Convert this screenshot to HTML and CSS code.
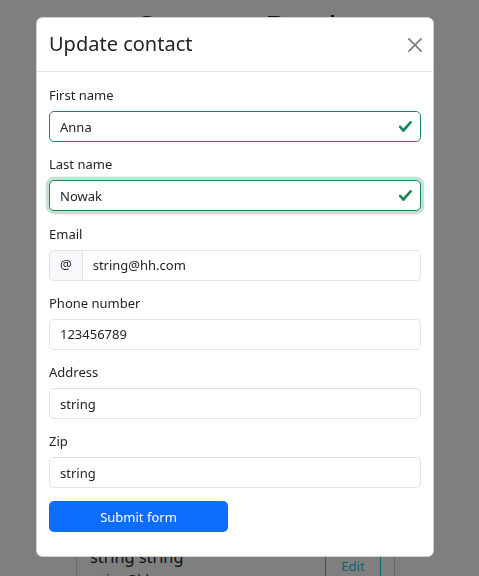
FILE: index.html
```html
<!DOCTYPE html>
<html lang="en">
<head>
<meta charset="utf-8">
<title>Contact Book</title>
<link rel="stylesheet" href="styles.css">
</head>
<body>
<main class="page">
  <h1 class="page-title">Contact Book</h1>
  <div class="contacts">
    <div class="contact-card"><div class="contact-info"><h5 class="contact-name">string string</h5><p class="contact-line">string@hh.com</p></div><button class="btn-edit" type="button">Edit</button></div>
    <div class="contact-card"><div class="contact-info"><h5 class="contact-name">string string</h5><p class="contact-line">string@hh.com</p></div><button class="btn-edit" type="button">Edit</button></div>
    <div class="contact-card"><div class="contact-info"><h5 class="contact-name">string string</h5><p class="contact-line">string@hh.com</p></div><button class="btn-edit" type="button">Edit</button></div>
    <div class="contact-card"><div class="contact-info"><h5 class="contact-name">string string</h5><p class="contact-line">string@hh.com</p></div><button class="btn-edit" type="button">Edit</button></div>
    <div class="contact-card"><div class="contact-info"><h5 class="contact-name">string string</h5><p class="contact-line">string@hh.com</p></div><button class="btn-edit" type="button">Edit</button></div>
    <div class="contact-card"><div class="contact-info"><h5 class="contact-name">string string</h5><p class="contact-line">string@hh.com</p></div><button class="btn-edit" type="button">Edit</button></div>
  </div>
</main>

<div class="backdrop"></div>

<div class="modal" role="dialog" aria-labelledby="modal-title">
  <div class="modal-content">
    <div class="modal-header">
      <h5 class="modal-title" id="modal-title">Update contact</h5>
      <button class="btn-close" type="button" aria-label="Close">
        <svg viewBox="0 0 16 16" width="14" height="14" aria-hidden="true"><path d="M.293.293a1 1 0 0 1 1.414 0L8 6.586 14.293.293a1 1 0 1 1 1.414 1.414L9.414 8l6.293 6.293a1 1 0 0 1-1.414 1.414L8 9.414l-6.293 6.293a1 1 0 0 1-1.414-1.414L6.586 8 .293 1.707a1 1 0 0 1 0-1.414"/></svg>
      </button>
    </div>
    <div class="modal-body">
      <form class="form">
        <div class="field">
          <label class="form-label" for="first-name">First name</label>
          <div class="valid-wrap">
            <input class="form-control is-valid" id="first-name" type="text" value="Anna">
            <svg class="valid-icon" viewBox="0 0 8 8" aria-hidden="true"><path d="M2.3 6.73.6 4.53c-.4-1.04.46-1.4 1.1-.8l1.1 1.4 3.4-3.8c.6-.63 1.6-.27 1.2.7l-4 4.6c-.43.5-.8.4-1.1.1z"/></svg>
          </div>
        </div>
        <div class="field">
          <label class="form-label" for="last-name">Last name</label>
          <div class="valid-wrap">
            <input class="form-control is-valid is-focused" id="last-name" type="text" value="Nowak">
            <svg class="valid-icon" viewBox="0 0 8 8" aria-hidden="true"><path d="M2.3 6.73.6 4.53c-.4-1.04.46-1.4 1.1-.8l1.1 1.4 3.4-3.8c.6-.63 1.6-.27 1.2.7l-4 4.6c-.43.5-.8.4-1.1.1z"/></svg>
          </div>
        </div>
        <div class="field">
          <label class="form-label" for="email">Email</label>
          <div class="input-group">
            <span class="input-group-text">@</span>
            <input class="form-control group-control" id="email" type="text" value="string@hh.com">
          </div>
        </div>
        <div class="field">
          <label class="form-label" for="phone">Phone number</label>
          <input class="form-control" id="phone" type="text" value="123456789">
        </div>
        <div class="field">
          <label class="form-label" for="address">Address</label>
          <input class="form-control" id="address" type="text" value="string">
        </div>
        <div class="field">
          <label class="form-label" for="zip">Zip</label>
          <input class="form-control" id="zip" type="text" value="string">
        </div>
        <button class="btn-submit" type="submit">Submit form</button>
      </form>
    </div>
  </div>
</div>
</body>
</html>
```

FILE: styles.css
```css
* {
  box-sizing: border-box;
}

body {
  margin: 0;
  background: #fff;
  color: #212529;
  font-family: "Noto Sans", sans-serif;
  font-size: 13px;
  line-height: 19.5px;
}

/* ---------- page behind the dialog ---------- */
.page-title {
  margin: 7px 0 44px;
  font-size: 34px;
  line-height: 43px;
  font-weight: 400;
  text-align: center;
}

.contacts {
  width: 319px;
  margin-left: 76px;
}

.contact-card {
  display: flex;
  justify-content: space-between;
  padding: 13px;
  margin-bottom: 13px;
  border: 1px solid rgba(0, 0, 0, 0.175);
  border-radius: 6.5px;
  background: #fff;
}

.contact-name {
  margin: 0 0 2px;
  font-size: 16.25px;
  line-height: 19.5px;
  font-weight: 400;
}

.contact-line {
  margin: 0 0 6px;
}

.btn-edit {
  align-self: flex-start;
  width: 56px;
  height: 31px;
  margin-top: 3px;
  padding: 0;
  border: 1px solid #0dcaf0;
  border-radius: 4.875px;
  background: transparent;
  color: #0dcaf0;
  font: inherit;
}

/* ---------- dialog ---------- */
.backdrop {
  position: fixed;
  inset: 0;
  background: rgba(0, 0, 0, 0.5);
}

.modal {
  position: fixed;
  inset: 0;
  overflow: hidden;
}

.modal-content {
  width: 398px;
  margin: 17px 0 0 36px;
  background: #fff;
  border: 1px solid rgba(0, 0, 0, 0.175);
  border-radius: 6.5px;
}

.modal-header {
  display: flex;
  align-items: center;
  justify-content: space-between;
  height: 54px;
  padding: 0 12px;
  border-bottom: 1px solid #dee2e6;
}

.modal-title {
  margin: 0 0 2px;
  font-size: 20px;
  line-height: 30px;
  font-weight: 400;
}

.btn-close {
  display: flex;
  margin-right: -1px;
  padding: 0;
  border: 0;
  background: transparent;
  opacity: 0.5;
}

.btn-close svg {
  fill: #000;
}

.modal-body {
  padding: 14px 12px 24px;
}

.field {
  margin-bottom: 13.25px;
}

.form-label {
  display: block;
  margin-bottom: 6px;
  line-height: 19px;
}

.form-control {
  display: block;
  width: 100%;
  height: 31px;
  padding: 0 10px;
  border: 1px solid #dee2e6;
  border-radius: 4.875px;
  background: #fff;
  color: #212529;
  font-family: "Noto Sans", sans-serif;
  font-size: 13px;
  line-height: 19px;
  outline: none;
}

.valid-wrap {
  position: relative;
}

.form-control.is-valid {
  border-color: #198754;
  padding-right: 30px;
}

.form-control.is-focused {
  box-shadow: 0 0 0 3.25px rgba(25, 135, 84, 0.25);
}

.valid-icon {
  position: absolute;
  top: 8px;
  right: 8px;
  width: 15px;
  height: 15px;
  fill: #198754;
}

.input-group {
  display: flex;
}

.input-group-text {
  display: flex;
  align-items: center;
  height: 31px;
  padding: 0 10px;
  border: 1px solid #dee2e6;
  border-radius: 4.875px 0 0 4.875px;
  background: #f8f9fa;
}

.group-control {
  flex: 1;
  min-width: 0;
  margin-left: -1px;
  border-radius: 0 4.875px 4.875px 0;
}

.btn-submit {
  display: block;
  width: 179px;
  height: 31px;
  margin-top: -0.5px;
  padding: 0;
  border: 0;
  border-radius: 4.875px;
  background: #0d6efd;
  color: #fff;
  font-family: "Noto Sans", sans-serif;
  font-size: 13px;
}
```
